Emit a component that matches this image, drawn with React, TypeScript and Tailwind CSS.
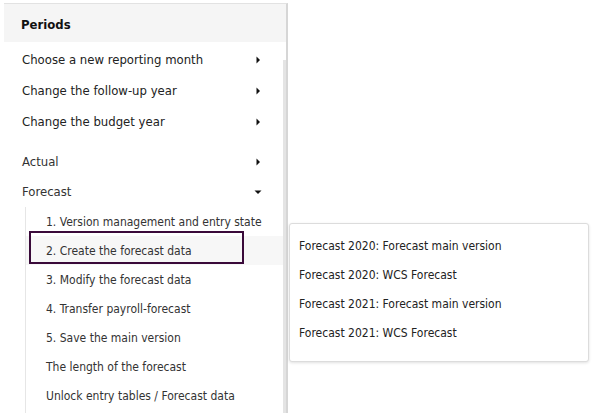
const font = { fontFamily: '"DejaVu Sans Condensed", "DejaVu Sans", sans-serif' }

function Caret({ down = false }: { down?: boolean }) {
  return down ? (
    <svg width="8" height="8" viewBox="0 0 8 8" className="shrink-0">
      <path d="M0.5 2.5 L7.5 2.5 L4 6 Z" fill="#111" />
    </svg>
  ) : (
    <svg width="8" height="8" viewBox="0 0 8 8" className="shrink-0">
      <path d="M2.5 0.5 L6 4 L2.5 7.5 Z" fill="#111" />
    </svg>
  )
}

const topItems = [
  "Choose a new reporting month",
  "Change the follow-up year",
  "Change the budget year",
]

const subItems = [
  "1. Version management and entry state",
  "2. Create the forecast data",
  "3. Modify the forecast data",
  "4. Transfer payroll-forecast",
  "5. Save the main version",
  "The length of the forecast",
  "Unlock entry tables / Forecast data",
]

const popItems = [
  "Forecast 2020: Forecast main version",
  "Forecast 2020: WCS Forecast",
  "Forecast 2021: Forecast main version",
  "Forecast 2021: WCS Forecast",
]

export default function App() {
  return (
    <div className="relative w-[604px] h-[413px] bg-white overflow-hidden text-[13px] text-[#333]" style={font}>
      <div className="ml-[4px] mt-[3px] w-[284px] h-[410px] border-t border-[#e2e2e2] border-r-2 border-r-[#d6d6d6] flex flex-col">
        <div className="h-[38px] bg-[#f5f5f5] flex items-center pl-[17px] pt-[3px] font-bold text-[#111]">Periods</div>
        <div className="flex flex-1 min-h-0">
          <div className="flex-1 flex flex-col">
            <div className="flex flex-col pt-[2px]">
              {topItems.map((t) => (
                <div key={t} className="h-[31px] flex items-center justify-between pl-[18px] pr-[21px] text-[#222]">
                  <span>{t}</span>
                  <Caret />
                </div>
              ))}
            </div>
            <div className="mt-[5px] h-px bg-[#e6e6e6]" />
            <div className="flex flex-col pt-[4px]">
              <div className="h-[31px] flex items-center justify-between pl-[18px] pr-[21px]">
                <span>Actual</span>
                <Caret />
              </div>
              <div className="h-[30px] flex items-center justify-between pl-[18px] pr-[21px]">
                <span>Forecast</span>
                <Caret down />
              </div>
              <div className="ml-[21px] border-l border-[#e6e6e6] flex flex-col pb-[10px]">
                {subItems.map((t) => (
                  <div
                    key={t}
                    className={`h-[29px] flex items-center pl-[20px] text-[12px] ${
                      t.startsWith("2.") ? "bg-[#f7f7f7] relative" : ""
                    }`}>
                    <span>{t}</span>
                    {t.startsWith("2.") && (
                      <div className="absolute left-[3px] top-[-5px] w-[215px] h-[33px] border-2 border-[#3a0a3a]" />
                    )}
                  </div>
                ))}
              </div>
            </div>
          </div>
          <div className="w-[3px] mt-[18px] bg-[#e4e4e4]" />
        </div>
      </div>

      <div className="absolute left-[289px] top-[223px] w-[300px] h-[139px] bg-white border border-[#dcdcdc] rounded-[3px] shadow-[0_1px_3px_rgba(0,0,0,0.12)] pt-[7px] text-[12px] text-[#222]">
        {popItems.map((t) => (
          <div key={t} className="h-[29px] flex items-center pl-[9px]">
            {t}
          </div>
        ))}
      </div>
    </div>
  )
}
